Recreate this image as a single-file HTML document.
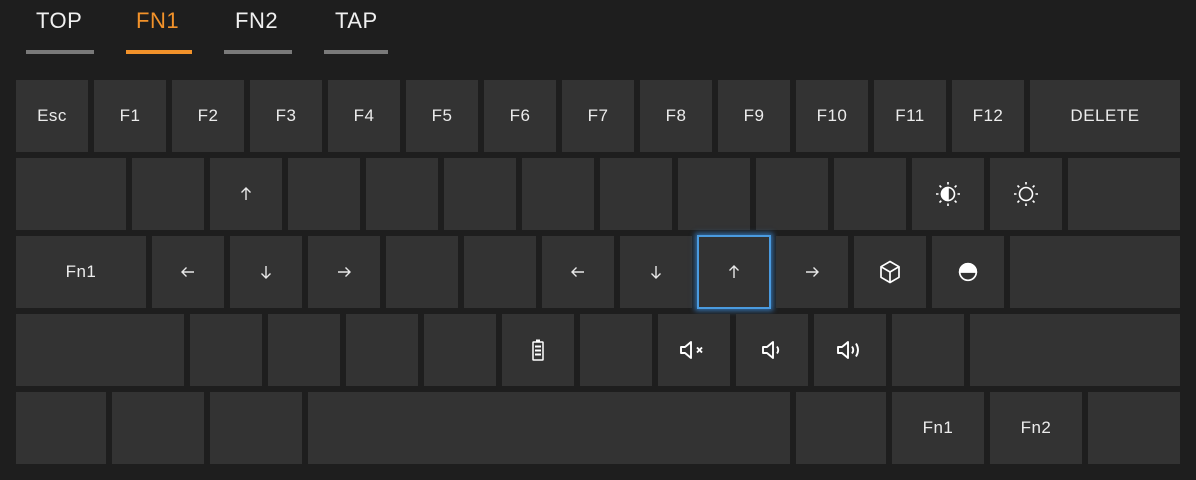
<!DOCTYPE html>
<html><head><meta charset="utf-8"><style>
body{margin:0;width:1196px;height:480px;background:#1e1e1e;overflow:hidden;position:relative;font-family:"Liberation Sans",sans-serif;}
.t{position:absolute;top:8px;font-size:22px;color:#f0f0f0;letter-spacing:0.5px}
.u{position:absolute;top:50px;height:4px;background:#7a7a7a}
.k{position:absolute;height:72px;width:72px;background:#333333;color:#ececec;font-size:17px;display:flex;align-items:center;justify-content:center;letter-spacing:0.5px;box-sizing:border-box}
.k svg{display:block}
</style></head><body>
<svg width="0" height="0" style="position:absolute"><defs>
<g id="up" stroke="#e8e8e8" stroke-width="1.4" fill="none"><path d="M7 1V13M2.5 5.5L7 1L11.5 5.5"/></g>
<g id="dn" stroke="#e8e8e8" stroke-width="1.4" fill="none"><path d="M7 1V13M2.5 8.5L7 13L11.5 8.5"/></g>
<g id="lf" stroke="#e8e8e8" stroke-width="1.4" fill="none"><path d="M1 7H13M5.5 2.5L1 7L5.5 11.5"/></g>
<g id="rt" stroke="#e8e8e8" stroke-width="1.4" fill="none"><path d="M1 7H13M8.5 2.5L13 7L8.5 11.5"/></g>
</defs></svg>
<div class="t" style="left:36px">TOP</div>
<div class="t" style="left:136px;color:#f2922a">FN1</div>
<div class="t" style="left:235px">FN2</div>
<div class="t" style="left:335px">TAP</div>
<div class="u" style="left:26px;width:68px"></div>
<div class="u" style="left:126px;width:66px;background:#f2922a"></div>
<div class="u" style="left:224px;width:68px"></div>
<div class="u" style="left:324px;width:64px"></div>

<div class="k" style="top:80px;left:16px">Esc</div>
<div class="k" style="top:80px;left:94px">F1</div>
<div class="k" style="top:80px;left:172px">F2</div>
<div class="k" style="top:80px;left:250px">F3</div>
<div class="k" style="top:80px;left:328px">F4</div>
<div class="k" style="top:80px;left:406px">F5</div>
<div class="k" style="top:80px;left:484px">F6</div>
<div class="k" style="top:80px;left:562px">F7</div>
<div class="k" style="top:80px;left:640px">F8</div>
<div class="k" style="top:80px;left:718px">F9</div>
<div class="k" style="top:80px;left:796px">F10</div>
<div class="k" style="top:80px;left:874px">F11</div>
<div class="k" style="top:80px;left:952px">F12</div>
<div class="k" style="top:80px;left:1030px;width:150px">DELETE</div>

<div class="k" style="top:158px;left:16px;width:110px"></div>
<div class="k" style="top:158px;left:132px"></div>
<div class="k" style="top:158px;left:210px"><svg width="14" height="14"><use href="#up"/></svg></div>
<div class="k" style="top:158px;left:288px"></div>
<div class="k" style="top:158px;left:366px"></div>
<div class="k" style="top:158px;left:444px"></div>
<div class="k" style="top:158px;left:522px"></div>
<div class="k" style="top:158px;left:600px"></div>
<div class="k" style="top:158px;left:678px"></div>
<div class="k" style="top:158px;left:756px"></div>
<div class="k" style="top:158px;left:834px"></div>
<div class="k" style="top:158px;left:912px"><svg width="30" height="30" viewBox="-15 -15 30 30" stroke="#fff" stroke-width="1.6" fill="none"><circle r="6.5"/><path d="M0-6.5A6.5 6.5 0 0 0 0 6.5Z" fill="#fff"/><path d="M0-9.5V-12M0 9.5V12M-9.5 0H-12M9.5 0H12M-6.7-6.7L-8.5-8.5M6.7-6.7L8.5-8.5M-6.7 6.7L-8.5 8.5M6.7 6.7L8.5 8.5"/></svg></div>
<div class="k" style="top:158px;left:990px"><svg width="30" height="30" viewBox="-15 -15 30 30" stroke="#fff" stroke-width="1.6" fill="none"><circle r="6.5"/><path d="M0-9.5V-12M0 9.5V12M-9.5 0H-12M9.5 0H12M-6.7-6.7L-8.5-8.5M6.7-6.7L8.5-8.5M-6.7 6.7L-8.5 8.5M6.7 6.7L8.5 8.5"/></svg></div>
<div class="k" style="top:158px;left:1068px;width:112px"></div>

<div class="k" style="top:236px;left:16px;width:130px">Fn1</div>
<div class="k" style="top:236px;left:152px"><svg width="14" height="14"><use href="#lf"/></svg></div>
<div class="k" style="top:236px;left:230px"><svg width="14" height="14"><use href="#dn"/></svg></div>
<div class="k" style="top:236px;left:308px"><svg width="14" height="14"><use href="#rt"/></svg></div>
<div class="k" style="top:236px;left:386px"></div>
<div class="k" style="top:236px;left:464px"></div>
<div class="k" style="top:236px;left:542px"><svg width="14" height="14"><use href="#lf"/></svg></div>
<div class="k" style="top:236px;left:620px"><svg width="14" height="14"><use href="#dn"/></svg></div>
<div class="k" style="top:235px;left:697px;width:74px;height:74px;border:2px solid #4a9be0;box-shadow:0 0 5px 2px rgba(60,140,220,0.7)"><svg width="14" height="14"><use href="#up"/></svg></div>
<div class="k" style="top:236px;left:776px"><svg width="14" height="14"><use href="#rt"/></svg></div>
<div class="k" style="top:236px;left:854px"><svg width="24" height="26" viewBox="-12 -13 24 26" stroke="#fff" stroke-width="1.7" fill="none" stroke-linejoin="round"><path d="M0-10.5L9-5.3V5.3L0 10.5L-9 5.3V-5.3Z"/><path d="M-9-5.3L0 0L9-5.3M0 0V10.5"/></svg></div>
<div class="k" style="top:236px;left:932px"><svg width="22" height="22" viewBox="-11 -11 22 22" stroke="#fff" stroke-width="1.7" fill="none"><circle r="8.3"/><path d="M-8.3 0A8.3 8.3 0 0 1 8.3 0Z" fill="#fff"/></svg></div>
<div class="k" style="top:236px;left:1010px;width:170px"></div>

<div class="k" style="top:314px;left:16px;width:168px"></div>
<div class="k" style="top:314px;left:190px"></div>
<div class="k" style="top:314px;left:268px"></div>
<div class="k" style="top:314px;left:346px"></div>
<div class="k" style="top:314px;left:424px"></div>
<div class="k" style="top:314px;left:502px"><svg width="14" height="24" viewBox="0 0 14 24" stroke="#fff" stroke-width="1.5" fill="none"><rect x="2" y="4" width="10" height="18" rx="0.5"/><path d="M5 2.5H9" stroke-width="2"/><path d="M4 8.5H10M4 12.5H10M4 16.5H10" stroke-width="2"/></svg></div>
<div class="k" style="top:314px;left:580px"></div>
<div class="k" style="top:314px;left:658px"><svg width="30" height="22" viewBox="0 0 30 22" stroke="#fff" stroke-width="1.9" fill="none" stroke-linejoin="round"><path d="M2 8H6L12 3V19L6 14H2Z"/><path d="M18 8.5L23 13.5M23 8.5L18 13.5"/></svg></div>
<div class="k" style="top:314px;left:736px"><svg width="24" height="22" viewBox="0 0 24 22" stroke="#fff" stroke-width="1.9" fill="none" stroke-linejoin="round"><path d="M3 8H7L13 3V19L7 14H3Z"/><path d="M17 7.5Q19.5 11 17 14.5"/></svg></div>
<div class="k" style="top:314px;left:814px"><svg width="30" height="22" viewBox="0 0 30 22" stroke="#fff" stroke-width="1.9" fill="none" stroke-linejoin="round"><path d="M3 8H7L13 3V19L7 14H3Z"/><path d="M17 7.5Q19.5 11 17 14.5M21 4.5Q25 11 21 17.5"/></svg></div>
<div class="k" style="top:314px;left:892px"></div>
<div class="k" style="top:314px;left:970px;width:210px"></div>

<div class="k" style="top:392px;left:16px;width:90px"></div>
<div class="k" style="top:392px;left:112px;width:92px"></div>
<div class="k" style="top:392px;left:210px;width:92px"></div>
<div class="k" style="top:392px;left:308px;width:482px"></div>
<div class="k" style="top:392px;left:796px;width:90px"></div>
<div class="k" style="top:392px;left:892px;width:92px">Fn1</div>
<div class="k" style="top:392px;left:990px;width:92px">Fn2</div>
<div class="k" style="top:392px;left:1088px;width:92px"></div>
</body></html>
